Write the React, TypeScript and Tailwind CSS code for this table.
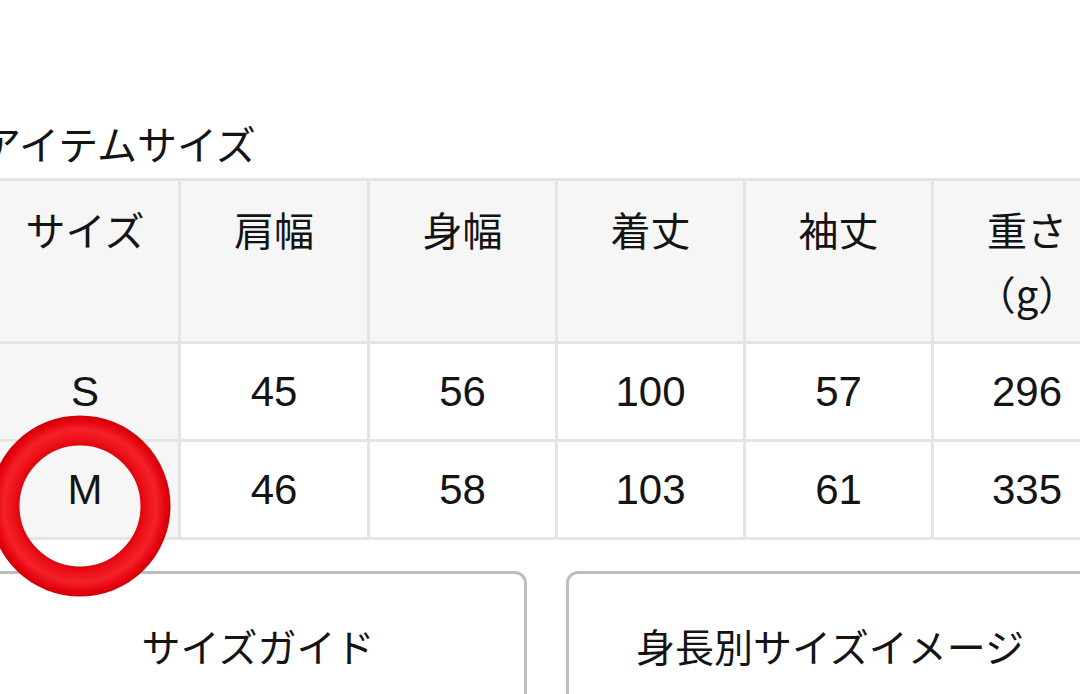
import React from "react";

const headers = ["サイズ", "肩幅", "身幅", "着丈", "袖丈"];
const rows = [
  ["S", "45", "56", "100", "57", "296"],
  ["M", "46", "58", "103", "61", "335"],
];

export default function App() {
  return (
    <div className="relative w-[1080px] h-[694px] overflow-hidden bg-white text-[#141414] font-['Noto_Sans_CJK_JP','Noto_Sans',sans-serif]">
      <div className="ml-[-11px] pt-[113px]">
        <div className="ml-[-8px] h-[60px] text-[40px] leading-[60px] whitespace-nowrap">
          アイテムサイズ
        </div>
        <div className="mt-[5px] inline-grid grid-cols-[186px_186px_185px_185px_185px_186px] gap-[3px] bg-[#e5e5e5] p-[3px]">
          {headers.map((h) => (
            <div
              key={h}
              className="h-[160px] bg-[#f6f6f6] pt-[16px] text-center text-[40px] leading-[64px]"
            >
              {h}
            </div>
          ))}
          <div className="h-[160px] bg-[#f6f6f6] pt-[16px] text-center text-[40px] leading-[64px]">
            <div>重さ</div>
            <div>（g）</div>
          </div>
          {rows.map((r) =>
            r.map((v, i) => (
              <div
                key={r[0] + i}
                className={
                  i === 0
                    ? "flex h-[95px] items-center justify-center bg-[#f6f6f6] text-[42px] leading-none font-['Liberation_Sans','Noto_Sans_CJK_JP',sans-serif]"
                    : "flex h-[95px] items-center justify-center bg-white text-[42px] leading-none font-['Liberation_Sans','Noto_Sans_CJK_JP',sans-serif]"
                }
              >
                {v}
              </div>
            ))
          )}
        </div>
        <div className="mt-[31px] flex gap-[39px]">
          <div className="flex h-[160px] w-[538px] shrink-0 items-center justify-center rounded-[12px] border-[3px] border-[#bdbdbd] pb-[11px] text-[39px]">
            サイズガイド
          </div>
          <div className="flex h-[160px] w-[528px] shrink-0 items-center justify-center rounded-[12px] border-[3px] border-[#bdbdbd] pb-[11px] text-[39px]">
            身長別サイズイメージ
          </div>
        </div>
      </div>
      <svg
        className="pointer-events-none absolute left-[-11px] top-[415px]"
        width="182"
        height="182"
        viewBox="0 0 182 182"
      >
        <defs>
          <radialGradient id="ring" cx="91" cy="91" r="91" gradientUnits="userSpaceOnUse">
            <stop offset="0.64" stopColor="#d6000b" />
            <stop offset="0.74" stopColor="#ee1118" />
            <stop offset="0.84" stopColor="#f52128" />
            <stop offset="0.95" stopColor="#e2000c" />
            <stop offset="1" stopColor="#cc0009" />
          </radialGradient>
        </defs>
        <circle cx="91" cy="91" r="75.5" fill="none" stroke="url(#ring)" strokeWidth="30" />
      </svg>
    </div>
  );
}
